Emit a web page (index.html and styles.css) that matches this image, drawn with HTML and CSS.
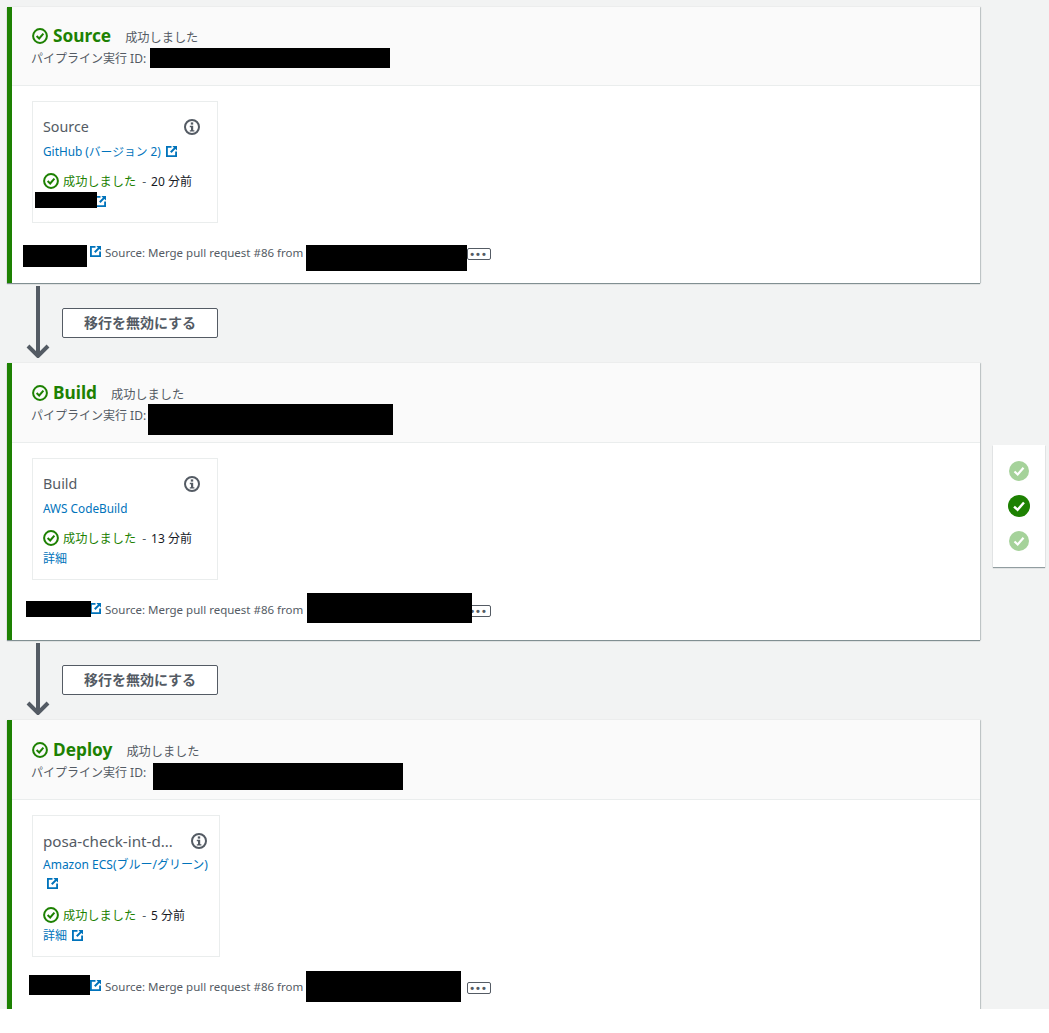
FILE: index.html
```html
<!DOCTYPE html>
<html lang="ja">
<head>
<meta charset="utf-8">
<title>Pipeline</title>
<link rel="stylesheet" href="styles.css">
</head>
<body>
<svg class="defs" width="0" height="0" aria-hidden="true">
  <symbol id="ok" viewBox="0 0 16 16"><circle cx="8" cy="8" r="6.900" fill="none" stroke="currentColor" stroke-width="2"/><path d="M4.600 8.100 7.200 10.500 11.400 5.700" fill="none" stroke="currentColor" stroke-width="2"/></symbol>
  <symbol id="info" viewBox="0 0 16 16"><circle cx="8" cy="8" r="7" fill="none" stroke="currentColor" stroke-width="2"/><rect x="6.800" y="3.400" width="2.400" height="2.200" fill="currentColor"/><path d="M5.800 6.800h3.400v4.400h1.200v1.400H5.800v-1.400h1.200V8.200H5.800z" fill="currentColor"/></symbol>
  <symbol id="ext" viewBox="0 0 12 12"><path d="M0 0H6V2H2V10H10V6H12V12H0z" fill="currentColor"/><path d="M7 0H12V5L10.200 3.400 6 7.600 4.400 6 8.600 1.800z" fill="currentColor"/></symbol>
  <symbol id="arrow" viewBox="0 0 24 72"><path d="M12 0V70M2 60 12 70 22 60" fill="none" stroke="currentColor" stroke-width="4"/></symbol>
</svg>
<div class="page">
  <main class="pipeline">

    <section class="stage s1">
      <header class="stage-head">
        <h2 class="stage-title"><svg class="ic-ok"><use href="#ok"/></svg>Source<span class="stage-status">成功しました</span></h2>
        <p class="exec">パイプライン実行 ID:</p>
        <span class="mask m-id"></span>
      </header>
      <div class="stage-body">
        <article class="action">
          <div class="action-head"><span class="action-name">Source</span><svg class="ic-info"><use href="#info"/></svg></div>
          <a class="provider">GitHub (バージョン 2) <svg class="ic-ext"><use href="#ext"/></svg></a>
          <div class="result"><svg class="ic-ok"><use href="#ok"/></svg><span class="ok-text">成功しました</span><span class="dash">-</span><span class="age">20 分前</span></div>
          <div class="details details-masked"><svg class="ic-ext"><use href="#ext"/></svg></div>
          <span class="mask m-detail"></span>
        </article>
      </div>
      <footer class="commit"><svg class="ic-ext"><use href="#ext"/></svg><span class="commit-text">Source: Merge pull request #86 from</span><button class="more">•••</button>
        <span class="mask m-sha"></span><span class="mask m-msg"></span>
      </footer>
    </section>

    <div class="transition">
      <svg class="arrow"><use href="#arrow"/></svg>
      <button class="toggle">移行を無効にする</button>
    </div>

    <section class="stage s2">
      <header class="stage-head">
        <h2 class="stage-title"><svg class="ic-ok"><use href="#ok"/></svg>Build<span class="stage-status">成功しました</span></h2>
        <p class="exec">パイプライン実行 ID:</p>
        <span class="mask m-id"></span>
      </header>
      <div class="stage-body">
        <article class="action">
          <div class="action-head"><span class="action-name">Build</span><svg class="ic-info"><use href="#info"/></svg></div>
          <a class="provider">AWS CodeBuild</a>
          <div class="result"><svg class="ic-ok"><use href="#ok"/></svg><span class="ok-text">成功しました</span><span class="dash">-</span><span class="age">13 分前</span></div>
          <div class="details"><a class="link">詳細</a></div>
        </article>
      </div>
      <footer class="commit"><svg class="ic-ext"><use href="#ext"/></svg><span class="commit-text">Source: Merge pull request #86 from</span><button class="more">•••</button>
        <span class="mask m-sha"></span><span class="mask m-msg"></span>
      </footer>
    </section>

    <div class="transition">
      <svg class="arrow"><use href="#arrow"/></svg>
      <button class="toggle">移行を無効にする</button>
    </div>

    <section class="stage s3">
      <header class="stage-head">
        <h2 class="stage-title"><svg class="ic-ok"><use href="#ok"/></svg>Deploy<span class="stage-status">成功しました</span></h2>
        <p class="exec">パイプライン実行 ID:</p>
        <span class="mask m-id"></span>
      </header>
      <div class="stage-body">
        <article class="action action-wide">
          <div class="action-head"><span class="action-name">posa-check-int-d…</span><svg class="ic-info"><use href="#info"/></svg></div>
          <a class="provider">Amazon ECS(ブルー/グリーン)<br><svg class="ic-ext ic-ext-line"><use href="#ext"/></svg></a>
          <div class="result"><svg class="ic-ok"><use href="#ok"/></svg><span class="ok-text">成功しました</span><span class="dash">-</span><span class="age">5 分前</span></div>
          <div class="details"><a class="link">詳細</a><svg class="ic-ext ic-ext-gap"><use href="#ext"/></svg></div>
        </article>
      </div>
      <footer class="commit"><svg class="ic-ext"><use href="#ext"/></svg><span class="commit-text">Source: Merge pull request #86 from</span><button class="more">•••</button>
        <span class="mask m-sha"></span><span class="mask m-msg"></span>
      </footer>
    </section>
  </main>

  <nav class="rail">
    <span class="dot dot-dim"><svg viewBox="0 0 20 20"><path d="M5.500 10.500 8.700 13.500 14.500 6.800"/></svg></span>
    <span class="dot"><svg viewBox="0 0 20 20"><path d="M5.500 10.500 8.700 13.500 14.500 6.800"/></svg></span>
    <span class="dot dot-dim"><svg viewBox="0 0 20 20"><path d="M5.500 10.500 8.700 13.500 14.500 6.800"/></svg></span>
  </nav>
</div>
</body>
</html>
```
FILE: styles.css
```css
* { box-sizing: border-box; }
html, body { margin: 0; background: #fff; }
body {
  font-family: "Noto Sans", "Noto Sans CJK JP", sans-serif;
  font-size: 12px;
  color: #545b64;
}
.defs { position: absolute; }
.page {
  display: flex;
  align-items: flex-start;
  gap: 13px;
  height: 1009px;
  padding: 7px 0 0 7px;
  overflow: hidden;
  background: #f2f3f3;
}
.pipeline { width: 973px; flex: none; }

.stage {
  position: relative;
  background: #fff;
  border-left: 5px solid #1d8102;
  box-shadow: 0 1px 1px 0 rgba(0, 28, 36, .45), 1px 0 1px 0 rgba(0, 28, 36, .15);
}
.s1 { height: 276px; }
.s2 { height: 277px; }
.s3 { height: 400px; }

.stage-head {
  position: relative;
  height: 79px;
  padding: 16px 20px 0 15px;
  background: #fafafa;
  border-bottom: 1px solid #eaeded;
}
.s2 .stage-head, .s3 .stage-head { height: 80px; padding-top: 17px; }
.stage-title {
  display: flex;
  align-items: center;
  height: 26px;
  margin: 0 0 0 5px;
  font-size: 17.300px;
  line-height: 26px;
  font-weight: 700;
  color: #1d8102;
}
.stage-title .ic-ok { margin-right: 5px; }
.stage-status {
  margin-left: 14px;
  padding-top: 3px;
  font-size: 12.200px;
  font-weight: 400;
  color: #545b64;
}
.exec { margin: 1px 0 0 4px; font-size: 12px; line-height: 18px; color: #545b64; }

.stage-body { padding: 15px 0 0 20px; }
.action {
  position: relative;
  width: 186px;
  height: 122px;
  padding: 15px 10px 0;
  border: 1px solid #eaeded;
}
.action-wide { width: 188px; height: 142px; }
.action-head { display: flex; align-items: center; justify-content: space-between; height: 20px; padding-right: 7px; }
.action-wide .action-head { padding-right: 2px; }
.action-name { font-size: 14.300px; line-height: 20px; color: #545b64; }
.action-wide .action-name { font-size: 15.200px; }
.provider { display: block; margin-top: 5px; font-size: 11.800px; line-height: 18px; color: #0073bb; }
.action-wide .provider { font-size: 12px; }
.provider .ic-ext { margin-left: 2px; }
.result { display: flex; align-items: center; margin-top: 12px; height: 18px; font-size: 12.200px; }
.action-wide .result { margin-top: 14px; }
.result .ic-ok { margin-right: 4px; }
.ok-text { color: #1d8102; }
.dash { margin: 0 5px 0 6px; }
.age { color: #16191f; font-size: 12px; }
.details { height: 19px; margin-top: 2px; font-size: 12px; line-height: 19px; color: #0073bb; }
.details-masked { padding-left: 52px; }
.link { color: #0073bb; }

.ic-ok { width: 16px; height: 16px; flex: none; color: #1d8102; }
.ic-info { width: 16px; height: 16px; flex: none; color: #545b64; }
.ic-ext { width: 11px; height: 11px; color: #0073bb; vertical-align: -1px; flex: none; }
.provider .ic-ext-line { margin-left: 4px; vertical-align: -2px; }
.ic-ext-gap { margin-left: 5px; }

.commit {
  position: relative;
  display: flex;
  align-items: center;
  height: 22px;
  margin-top: 19px;
  padding: 0 0 2px 78px;
  font-size: 11.500px;
  color: #545b64;
}
.commit .ic-ext { margin-right: 4px; margin-top: -2px; }
.commit-text { white-space: nowrap; }
.more {
  position: absolute;
  left: 455px;
  top: 6px;
  width: 24px;
  height: 12px;
  padding: 0;
  border: 1px solid #545b64;
  border-radius: 2px;
  background: #fff;
  color: #545b64;
  font: 700 11px/9px "Liberation Sans", sans-serif;
  letter-spacing: 2px;
}

.transition {
  display: flex;
  align-items: flex-start;
  height: 80px;
  padding-top: 3px;
}
.arrow { width: 24px; height: 72px; margin-left: 19px; color: #545b64; flex: none; }
.toggle {
  width: 156px;
  height: 30px;
  margin: 22px 0 0 12px;
  padding: 0 0 2px;
  border: 1px solid #545b64;
  border-radius: 2px;
  background: #fff;
  color: #545b64;
  font-family: inherit;
  font-size: 14px;
  font-weight: 700;
}

.mask { position: absolute; background: #000; }
.s1 .m-id { left: 138px; top: 41px; width: 240px; height: 20px; }
.s2 .m-id { left: 136px; top: 41px; width: 245px; height: 31px; }
.s3 .m-id { left: 141px; top: 43px; width: 250px; height: 27px; }
.m-detail { left: 2px; top: 90px; width: 62px; height: 16px; }
.s1 .m-sha { left: 11px; top: 3px; width: 64px; height: 22px; }
.s1 .m-msg { left: 294px; top: 3px; width: 161px; height: 26px; }
.s2 .m-sha { left: 14px; top: 2px; width: 65px; height: 16px; }
.s2 .m-msg { left: 295px; top: -6px; width: 165px; height: 30px; }
.s3 .m-sha { left: 17px; top: -1px; width: 61px; height: 20px; }
.s3 .m-msg { left: 294px; top: -5px; width: 155px; height: 31px; }

.rail {
  display: flex;
  flex-direction: column;
  align-items: center;
  gap: 14px;
  width: 52px;
  height: 122px;
  margin-top: 438px;
  padding-top: 16px;
  background: #fff;
  box-shadow: 0 1px 1px 0 rgba(0, 28, 36, .4);
  flex: none;
}
.dot { display: block; width: 22px; height: 22px; border-radius: 50%; background: #1d8102; }
.dot svg { display: block; width: 22px; height: 22px; fill: none; stroke: #fff; stroke-width: 2.2; }
.dot-dim { width: 20px; height: 20px; margin: 0; background: #a5d29a; }
.dot-dim svg { width: 20px; height: 20px; }
```
